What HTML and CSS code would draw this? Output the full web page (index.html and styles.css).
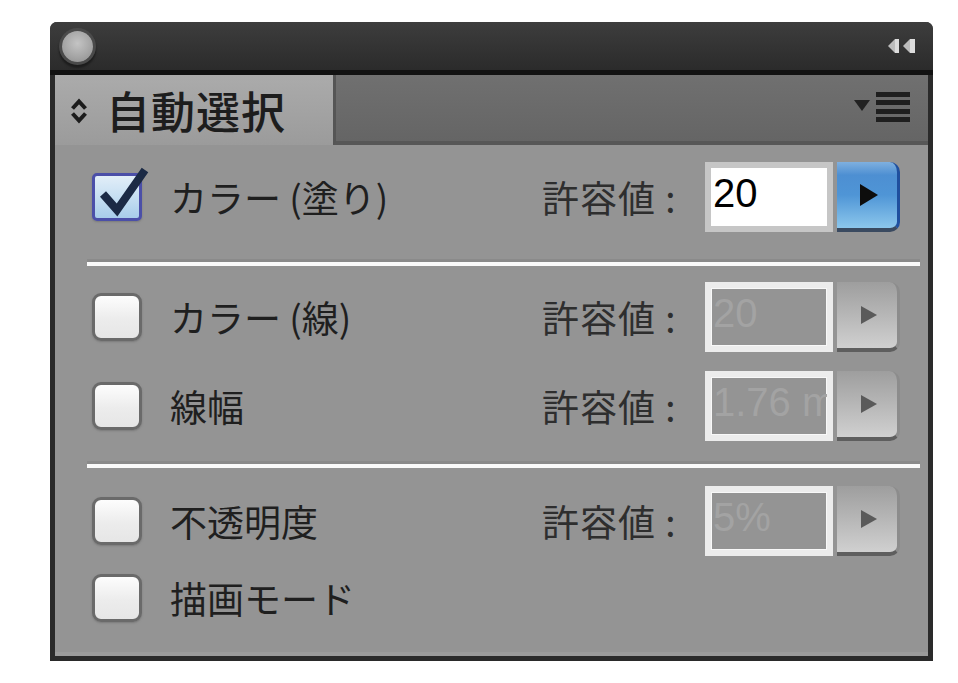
FILE: index.html
```html
<!DOCTYPE html>
<html lang="ja">
<head>
    <meta charset="UTF-8">
    <title>自動選択</title>
    <link rel="stylesheet" href="styles.css">
</head>
<body>
    <div class="panel">
        <div class="titlebar">
            <span class="close-dot"></span>
            <svg class="collapse" width="30" height="20" viewBox="0 0 30 20">
                <polygon points="0,10 7,3 7,17" fill="#bdbdbd"/>
                <rect x="7" y="3" width="4" height="14" fill="#dcdcdc"/>
                <polygon points="15,10 22,3 22,17" fill="#bdbdbd"/>
                <rect x="22" y="3" width="5" height="14" fill="#dcdcdc"/>
            </svg>
        </div>
        <div class="tabbar">
            <div class="tab">
                <svg class="updown" width="18" height="26" viewBox="0 0 18 26">
                    <path d="M2.5 10.5 L9 3.5 L15.5 10.5" fill="none" stroke="#1c1c1c" stroke-width="4"/>
                    <path d="M2.5 15.5 L9 22.5 L15.5 15.5" fill="none" stroke="#1c1c1c" stroke-width="4"/>
                </svg>
                <span class="tab-title">自動選択</span>
            </div>
            <div class="tab-rest">
                <svg class="menu" width="58" height="34" viewBox="0 0 58 34">
                    <polygon points="0,8 16,8 8,19" fill="#222"/>
                    <rect x="22" y="0" width="34" height="5" fill="#1f1f1f"/>
                    <rect x="22" y="8" width="34" height="5" fill="#1f1f1f"/>
                    <rect x="22" y="17" width="34" height="5" fill="#1f1f1f"/>
                    <rect x="22" y="25" width="34" height="5" fill="#1f1f1f"/>
                </svg>
            </div>
        </div>
        <div class="content">
            <div class="row row-fill">
                <span class="check checked">
                    <svg class="tick" width="56" height="58" viewBox="0 0 56 58">
                        <path d="M8 30 L22 46 L50 6" fill="none" stroke="#1b2a45" stroke-width="8" stroke-linejoin="miter"/>
                    </svg>
                </span>
                <span class="label">カラー (塗り)</span>
                <span class="tol">許容値 :</span>
                <span class="field">20</span>
                <span class="step step-on"><i></i></span>
            </div>
            <div class="sep sep-1"></div>
            <div class="row row-stroke">
                <span class="check"></span>
                <span class="label">カラー (線)</span>
                <span class="tol">許容値 :</span>
                <span class="field off">20</span>
                <span class="step"><i></i></span>
            </div>
            <div class="row row-width">
                <span class="check"></span>
                <span class="label">線幅</span>
                <span class="tol">許容値 :</span>
                <span class="field off">1.76 m</span>
                <span class="step"><i></i></span>
            </div>
            <div class="sep sep-2"></div>
            <div class="row row-opacity">
                <span class="check"></span>
                <span class="label">不透明度</span>
                <span class="tol">許容値 :</span>
                <span class="field off">5%</span>
                <span class="step"><i></i></span>
            </div>
            <div class="row row-blend">
                <span class="check"></span>
                <span class="label">描画モード</span>
            </div>
        </div>
    </div>
</body>
</html>
```

FILE: styles.css
```css
body {
    margin: 0;
    background: #fff;
    font-family: "Noto Sans CJK JP", "Noto Sans", sans-serif;
}

.panel {
    width: 883px;
    margin: 22px 0 0 50px;
    box-sizing: border-box;
    border: 5px solid #2a2a2a;
    border-top: 0;
    border-radius: 7px 7px 0 0;
    background: #949494;
}

.titlebar {
    height: 48px;
    margin: 0 -5px;
    padding: 0 15px 0 12px;
    display: flex;
    align-items: center;
    justify-content: space-between;
    background: linear-gradient(#3d3d3d, #2b2b2b);
    border-bottom: 5px solid #121212;
    border-radius: 7px 7px 0 0;
}

.close-dot {
    width: 31px;
    height: 31px;
    border-radius: 50%;
    background: radial-gradient(circle at 50% 40%, #c4c4c4, #a3a3a3 60%, #8a8a8a);
    box-shadow: 0 0 0 3px #4a4a4a, 0 3px 2px 3px #1d1d1d;
}

.tabbar {
    display: flex;
    height: 70px;
}

.tab {
    width: 278px;
    display: flex;
    align-items: center;
    gap: 18px;
    padding-left: 15px;
    box-sizing: border-box;
    background: linear-gradient(#ababab, #9b9b9b);
}

.updown {
    margin-top: 2px;
}

.tab-title {
    font-size: 44px;
    font-weight: 500;
    color: #1d1d1d;
    letter-spacing: 1px;
}

.tab-rest {
    flex: 1;
    display: flex;
    align-items: center;
    justify-content: flex-end;
    padding-right: 16px;
    background: linear-gradient(#707070, #656565);
    border-left: 3px solid #555;
    border-bottom: 4px solid #575757;
}

.menu {
    margin-top: 2px;
}

.content {
    padding: 17px 8px 19px 32px;
    border-bottom: 4px solid #9b9b9b;
}

.row {
    display: flex;
    align-items: center;
    height: 70px;
    padding-left: 5px;
}

.row-stroke { margin-top: 16px; }
.row-width { margin-top: 19px; }
.row-opacity { margin-top: 18px; }
.row-blend { margin-top: 7px; }

.check {
    position: relative;
    width: 50px;
    height: 48px;
    box-sizing: border-box;
    margin-right: 28px;
    border: 3px solid #6a6a6a;
    border-radius: 9px;
    background: linear-gradient(#fdfdfd, #ececec 55%, #e6e6e6);
    box-shadow: 0 1px 2px #7a7a7a;
}

.check.checked {
    border-color: #4b4fa8;
    border-radius: 5px;
    background: linear-gradient(#e2eef8, #c6dff2 50%, #a8cdea);
}

.tick {
    position: absolute;
    left: 0;
    top: -12px;
}

.label {
    width: 372px;
    font-size: 37px;
    color: #1f1f1f;
    white-space: nowrap;
}

.tol {
    width: 163px;
    font-size: 37px;
    color: #2e2e2e;
    letter-spacing: 1px;
    white-space: nowrap;
}

.field {
    width: 128px;
    height: 70px;
    box-sizing: border-box;
    border: 6px solid #c6c6c6;
    background: #fff;
    padding-left: 2px;
    font-family: "Liberation Sans", Arial, sans-serif;
    font-size: 40px;
    line-height: 50px;
    color: #000;
    overflow: hidden;
    white-space: nowrap;
}

.field.off {
    border-color: #ececec;
    box-shadow: inset 0 0 0 1px #f8f8f8;
    background: #949494;
    color: #a3a3a3;
}

.step {
    width: 63px;
    height: 70px;
    margin-left: 4px;
    box-sizing: border-box;
    display: flex;
    align-items: center;
    justify-content: center;
    border-radius: 0 10px 10px 0;
    background: linear-gradient(#9e9e9e, #b4b4b4 45%, #d0d0d0);
    border-right: 3px solid #8c8c8c;
    border-bottom: 4px solid #5e5e5e;
}

.step i {
    width: 0;
    height: 0;
    border-left: 16px solid #5a5a5a;
    border-top: 9px solid transparent;
    border-bottom: 9px solid transparent;
    margin-left: 4px;
}

.step-on {
    background: linear-gradient(#7fb0df, #4d8fd2 20%, #4f95d6 50%, #8cc7ec);
    border-right-color: #1f4f9e;
    border-bottom-color: #3a4a60;
}

.step-on i {
    border-left: 18px solid #0d0d0d;
    border-top-width: 11px;
    border-bottom-width: 11px;
}

.sep {
    height: 4px;
    background: #fafafa;
    box-shadow: 0 -3px 0 #8a8a8a;
}

.sep-1 { margin-top: 30px; }
.sep-2 { margin-top: 23px; }
```
